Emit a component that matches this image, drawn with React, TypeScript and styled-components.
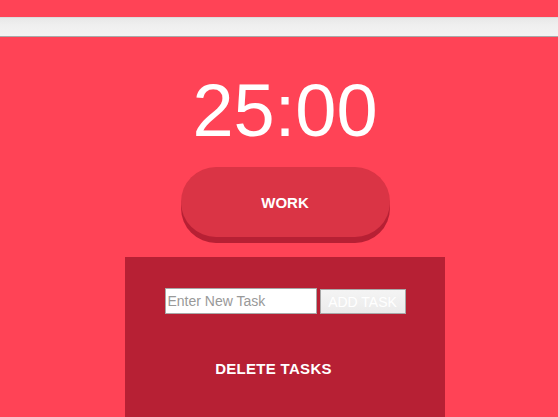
import React from "react";
import styled, { createGlobalStyle } from "styled-components";

const Global = createGlobalStyle`
  html, body { margin: 0; padding: 0; background: #ff4356; }
  body { font-family: "Liberation Sans", Arial, Helvetica, sans-serif; overflow: hidden; }
  * { box-sizing: border-box; }
`;

const Page = styled.div`
  width: 558px;
  height: 417px;
  background: #ff4356;
  padding-top: 17px;
  display: flex;
  flex-direction: column;
`;

const TopBar = styled.div`
  height: 20px;
  background: linear-gradient(to bottom, #e8e8e8 0%, #efefef 40%, #f3f3f3 100%);
  border-top: 1px solid #dcdcdc;
  border-bottom: 1px solid #a9a9a9;
`;

const Main = styled.div`
  display: flex;
  flex-direction: column;
  align-items: center;
  padding-left: 12px;
`;

const Timer = styled.div`
  margin-top: 37px;
  font-size: 74px;
  line-height: 74px;
  color: #ffffff;
  font-family: "Liberation Sans", Arial, Helvetica, sans-serif;
`;

const ModeButton = styled.button`
  margin-top: 19px;
  width: 209px;
  height: 70px;
  border: none;
  border-radius: 35px;
  background: #da3445;
  box-shadow: 0 6px 0 #b72034;
  color: #ffffff;
  font-family: "Liberation Sans", Arial, Helvetica, sans-serif;
  font-weight: bold;
  font-size: 15px;
  padding: 0;
  cursor: pointer;
`;

const Panel = styled.div`
  margin-top: 20px;
  width: 320px;
  height: 160px;
  background: #b72034;
  display: flex;
  flex-direction: column;
  align-items: center;
  padding-top: 31px;
`;

const Row = styled.div`
  display: flex;
  align-items: flex-start;
  gap: 3px;
`;

const TaskInput = styled.input`
  width: 152px;
  height: 26px;
  border: 1px solid #a8a8a8;
  background: #ffffff;
  font-family: "Liberation Sans", Arial, Helvetica, sans-serif;
  font-size: 14px;
  padding: 0 2px;
  margin: 0;
  outline: none;
  &::placeholder { color: #999999; }
`;

const AddButton = styled.button`
  margin-top: 1px;
  width: 86px;
  height: 25px;
  border: 1px solid #a8a8a8;
  background: linear-gradient(to bottom, #f4f4f4, #ebebeb);
  color: #ffffff;
  font-family: "Liberation Sans", Arial, Helvetica, sans-serif;
  font-size: 14px;
  padding: 0;
`;

const DeleteRow = styled.div`
  margin-top: 46px;
  width: 100%;
  display: flex;
  justify-content: center;
  padding-right: 23px;
`;

const DeleteButton = styled.button`
  border: none;
  background: transparent;
  color: #ffffff;
  font-family: "Liberation Sans", Arial, Helvetica, sans-serif;
  font-weight: bold;
  font-size: 15px;
  line-height: 18px;
  letter-spacing: 0.3px;
  padding: 0;
`;

export default function App() {
  return (
    <>
      <Global />
      <Page>
        <TopBar />
        <Main>
          <Timer>25:00</Timer>
          <ModeButton>WORK</ModeButton>
          <Panel>
            <Row>
              <TaskInput placeholder="Enter New Task" />
              <AddButton>ADD TASK</AddButton>
            </Row>
            <DeleteRow>
              <DeleteButton>DELETE TASKS</DeleteButton>
            </DeleteRow>
          </Panel>
        </Main>
      </Page>
    </>
  );
}
